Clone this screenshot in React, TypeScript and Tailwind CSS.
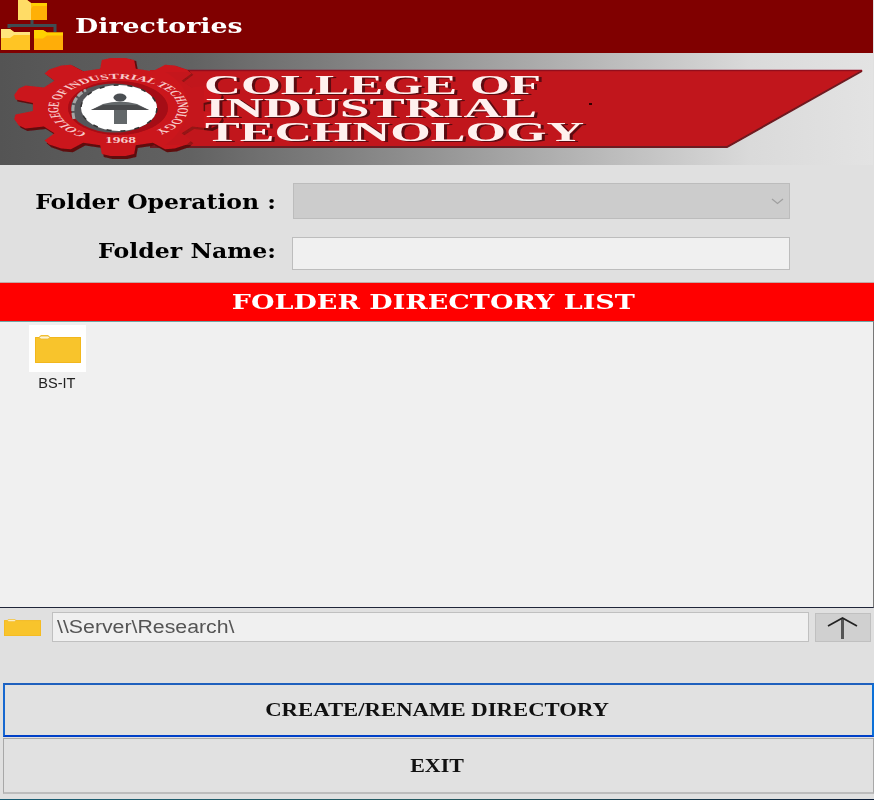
import React from "react";

const SERIF = "font-['DejaVu_Serif','Liberation_Serif',serif]";

function HierarchyIcon() {
  return (
    <svg className="h-[53px] w-[66px] shrink-0" viewBox="0 0 66 53">
      <path d="M32 19v7M9 28v-2.500h46V32" fill="none" stroke="#3f4d52" strokeWidth="3" />
      <path d="M18 0h9l4 3h16v17H18z" fill="#ffc414" />
      <path d="M18 0h9l4 3v17H18z" fill="#ffdc66" />
      <path d="M31 9l4-6h12v17H31z" fill="#ffb006" />
      <path d="M31 3h16v3H33z" fill="#ffd000" />
      <path d="M1 29h9l4 3h16v18H1z" fill="#ffc524" />
      <path d="M1 29h9l4 3h16v3H14l-4 3H1z" fill="#ffe47c" />
      <path d="M34 30h9l4 2.500h16V50H34z" fill="#ffad08" />
      <path d="M34 30h9l4 2.500h16v3H47l-4 3h-9z" fill="#ffd000" />
    </svg>
  );
}

function gearPath(cx: number, cy: number, rx: number, ry: number) {
  const pts: string[] = [];
  for (let i = 0; i < 10; i++) {
    const mid = -90 + i * 36;
    const steps: [number, number][] = [
      [-12, 0.8],
      [-9, 0.97],
      [-4, 1],
      [4, 1],
      [9, 0.97],
      [12, 0.8],
    ];
    for (const [offset, radius] of steps) {
      const a = ((mid + offset) * Math.PI) / 180;
      pts.push(`${(cx + Math.cos(a) * rx * radius).toFixed(1)} ${(cy + Math.sin(a) * ry * radius).toFixed(1)}`);
    }
  }
  return `M${pts.join("L")}Z`;
}

function Banner() {
  const lines: [string, number, number, number][] = [
    ["COLLEGE OF", 204, 93.5, 337],
    ["INDUSTRIAL", 205, 116.500, 332],
    ["TECHNOLOGY", 205, 141, 379],
  ];
  return (
    <svg className="block h-[112px] w-[873px] shrink-0" viewBox="0 53 873 112">
      <defs>
        <linearGradient id="steel" x1="0" x2="1" y1="0" y2="0">
          <stop offset="0" stopColor="#545454" />
          <stop offset=".22" stopColor="#626262" />
          <stop offset=".45" stopColor="#8b8b8b" />
          <stop offset=".66" stopColor="#b4b4b4" />
          <stop offset=".86" stopColor="#dadada" />
          <stop offset="1" stopColor="#e3e3e3" />
        </linearGradient>
        <linearGradient id="rim" x1="0" x2="1" y1="0" y2="0">
          <stop offset="0" stopColor="#8a5050" />
          <stop offset="1" stopColor="#f0dede" />
        </linearGradient>
        <filter id="soft" x="-5%" y="-5%" width="110%" height="110%">
          <feGaussianBlur stdDeviation="0.6" />
        </filter>
      </defs>
      <rect y="53" width="873" height="112" fill="url(#steel)" />
      <g filter="url(#soft)">
        <path d="M165 68.500H863" stroke="url(#rim)" strokeWidth="2" />
        <path d="M150 70H863L728 147H150z" fill="#c1171c" />
        <path d="M862 71L727 147H150" fill="none" stroke="#6d1a20" strokeWidth="2" />
        <path d="M160 70.500H862" stroke="#93101a" strokeWidth="1.500" />
        <path d={gearPath(120, 109, 107, 50)} fill="#5f0c10" />
        <path d={gearPath(118, 107, 107, 49)} fill="#cb151b" />
        <path d="M165 72h39v73h-39q20-14 22-37t-22-36z" fill="#c1171c" opacity=".55" />
        <ellipse cx="118" cy="108" rx="50" ry="27" fill="#a50f14" />
        <ellipse cx="114" cy="108" rx="43" ry="24.500" fill="#55575a" />
        <path d="M74 119q-5-20 12-29" fill="none" stroke="#a5a5a5" strokeWidth="3" strokeDasharray="6 2" />
        <ellipse cx="119" cy="108" rx="38" ry="23" fill="#fff" />
        <ellipse cx="119" cy="108" rx="38" ry="23" fill="none" stroke="#333" strokeWidth="1.500" strokeDasharray="5 9" />
        <ellipse cx="120" cy="97.500" rx="6.500" ry="4" fill="#4c4f52" />
        <path d="M91 110l12-6q17-5 34 0l12 6h-22v14h-13v-14z" fill="#64676a" />
        <path d="M91 110l12-5h34l12 5z" fill="#494b4e" />
      </g>
      <g transform="translate(118 108) scale(2.05 1)">
        <path id="ring" d="M-15 25A29.200 29.200 0 1 1 16 24.500" fill="none" />
        <text className="font-['Liberation_Serif',serif] text-[7.500px] font-bold" fill="#f7c9c9">
          <textPath href="#ring" textLength="148" lengthAdjust="spacing">COLLEGE OF INDUSTRIAL TECHNOLOGY</textPath>
        </text>
      </g>
      <text className="font-['Liberation_Serif',serif] text-[8px] font-bold" x="105" y="143" textLength="31" lengthAdjust="spacingAndGlyphs" fill="#f7c9c9">1968</text>
      {lines.map(([label, x, y, w]) => (
        <text
          key={label}
          className="font-['Liberation_Serif',serif] text-[27px] font-bold [filter:drop-shadow(3px_1px_0.5px_#5c0b11)]"
          x={x}
          y={y}
          textLength={w}
          lengthAdjust="spacingAndGlyphs"
          fill="#fff0ee"
        >
          {label}
        </text>
      ))}
      <rect x="589" y="103" width="3" height="2" fill="#300" />
    </svg>
  );
}

function FolderIcon({ className }: { className: string }) {
  return (
    <svg className={className} viewBox="0 0 46 28" preserveAspectRatio="none">
      <path d="M0 2h4l2-2h7l2 2h31v26H0z" fill="#f8c42c" />
      <path d="M.5 27.500V2.500h45v25z" fill="none" stroke="#f2b71c" />
      <path d="M4 2.500l2-1.500h7l2 1.500-2 1.500H6z" fill="#fff4cf" stroke="#e9b93a" strokeWidth=".8" />
    </svg>
  );
}

export default function App() {
  return (
    <div className="flex h-[800px] w-[874px] flex-col overflow-hidden bg-[#e0e0e0] text-black">
      <header className="flex h-[53px] w-[873px] shrink-0 items-center bg-[#800000]">
        <HierarchyIcon />
        <h1 className={`${SERIF} ml-[9px] origin-left scale-x-[1.34] text-[20px] leading-[53px] font-bold whitespace-nowrap text-white`}>Directories</h1>
      </header>
      <Banner />
      <form className="flex h-[117px] shrink-0 flex-col pt-[18px]">
        <div className="flex h-[36px] items-center">
          <label className={`${SERIF} w-[276px] origin-right scale-x-[1.175] pt-[2px] text-right text-[20px] font-bold whitespace-nowrap`}>Folder Operation :</label>
          <div className="ml-[17px] flex h-[36px] w-[497px] items-center justify-end border border-[#bcbcbc] bg-[#cccccc] pr-[5px]">
            <svg className="h-[7px] w-[13px]" viewBox="0 0 13 7">
              <path d="M1 1l5.500 4.500L12 1" fill="none" stroke="#a0a0a0" strokeWidth="1.300" />
            </svg>
          </div>
        </div>
        <div className="mt-[18px] flex h-[33px] items-center">
          <label className={`${SERIF} w-[276px] origin-right scale-x-[1.18] pb-[6px] text-right text-[20px] font-bold whitespace-nowrap`}>Folder Name:</label>
          <div className="ml-[16px] h-[33px] w-[498px] border border-[#bdbdbd] bg-[#f0f0f0]" />
        </div>
      </form>
      <div className="flex h-[39px] shrink-0 items-center justify-center border-t border-[#c4a9a5] bg-[#ff0000]">
        <h2 className={`${SERIF} mr-[8px] scale-x-[1.35] text-[20px] font-bold whitespace-nowrap text-white`}>FOLDER DIRECTORY LIST</h2>
      </div>
      <main className="h-[287px] shrink-0 border-t border-r border-b border-t-[#6fa5a5] border-r-[#777] border-b-[#20263a] bg-[#f0f0f0] pt-[3px] pl-[29px]">
        <div className="flex w-[57px] flex-col items-center">
          <div className="flex h-[47px] w-[57px] items-center justify-center bg-white">
            <FolderIcon className="h-[28px] w-[46px]" />
          </div>
          <span className="mt-[2px] -ml-[2px] scale-x-[1.04] font-['Liberation_Sans',sans-serif] text-[14px] leading-[18px] whitespace-nowrap text-[#222]">BS-IT</span>
        </div>
      </main>
      <div className="flex h-[75px] shrink-0 items-start pt-[4px] pl-[4px]">
        <FolderIcon className="mt-[7px] h-[17px] w-[37px]" />
        <div className="ml-[11px] flex h-[30px] w-[757px] items-center border border-[#c0c0c0] bg-[#f0f0f0] pl-[4px]">
          <span className="origin-left scale-x-[1.183] font-['Liberation_Sans',sans-serif] text-[18px] whitespace-nowrap text-[#555]">\\Server\Research\</span>
        </div>
        <button className="mt-[1px] ml-[6px] flex h-[29px] w-[56px] items-center justify-center border border-[#c0c0c0] bg-[#d0d0d0]">
          <svg className="h-[24px] w-[32px]" viewBox="0 0 32 24">
            <path d="M15.500 2v21" stroke="#555" strokeWidth="3" />
            <path d="M1 10l14.500-8L30 10" fill="none" stroke="#222" strokeWidth="1.700" />
          </svg>
        </button>
      </div>
      <div className="flex flex-col pl-[3px]">
        <button className="flex h-[54px] w-[871px] items-center justify-center border-2 border-t-[#1f60bd] border-r-[#0b70d8] border-b-[#0040c8] border-l-[#1768d0] bg-[#e1e1e1]">
          <span className="mr-[3px] scale-x-[1.263] pt-[1px] font-['Liberation_Serif',serif] text-[18px] font-bold whitespace-nowrap text-[#111]">CREATE/RENAME DIRECTORY</span>
        </button>
        <button className="mt-[1px] flex h-[56px] w-[871px] items-center justify-center border border-b-2 border-[#a8a8a8] border-b-[#bcbcbc] bg-[#e1e1e1]">
          <span className="mr-[3px] scale-x-[1.22] pt-[1px] font-['Liberation_Serif',serif] text-[18px] font-bold whitespace-nowrap text-[#111]">EXIT</span>
        </button>
      </div>
      <div className="mt-auto h-px bg-gradient-to-r from-[#175b72] via-[#245a60] to-[#0a1c38]" />
    </div>
  );
}
